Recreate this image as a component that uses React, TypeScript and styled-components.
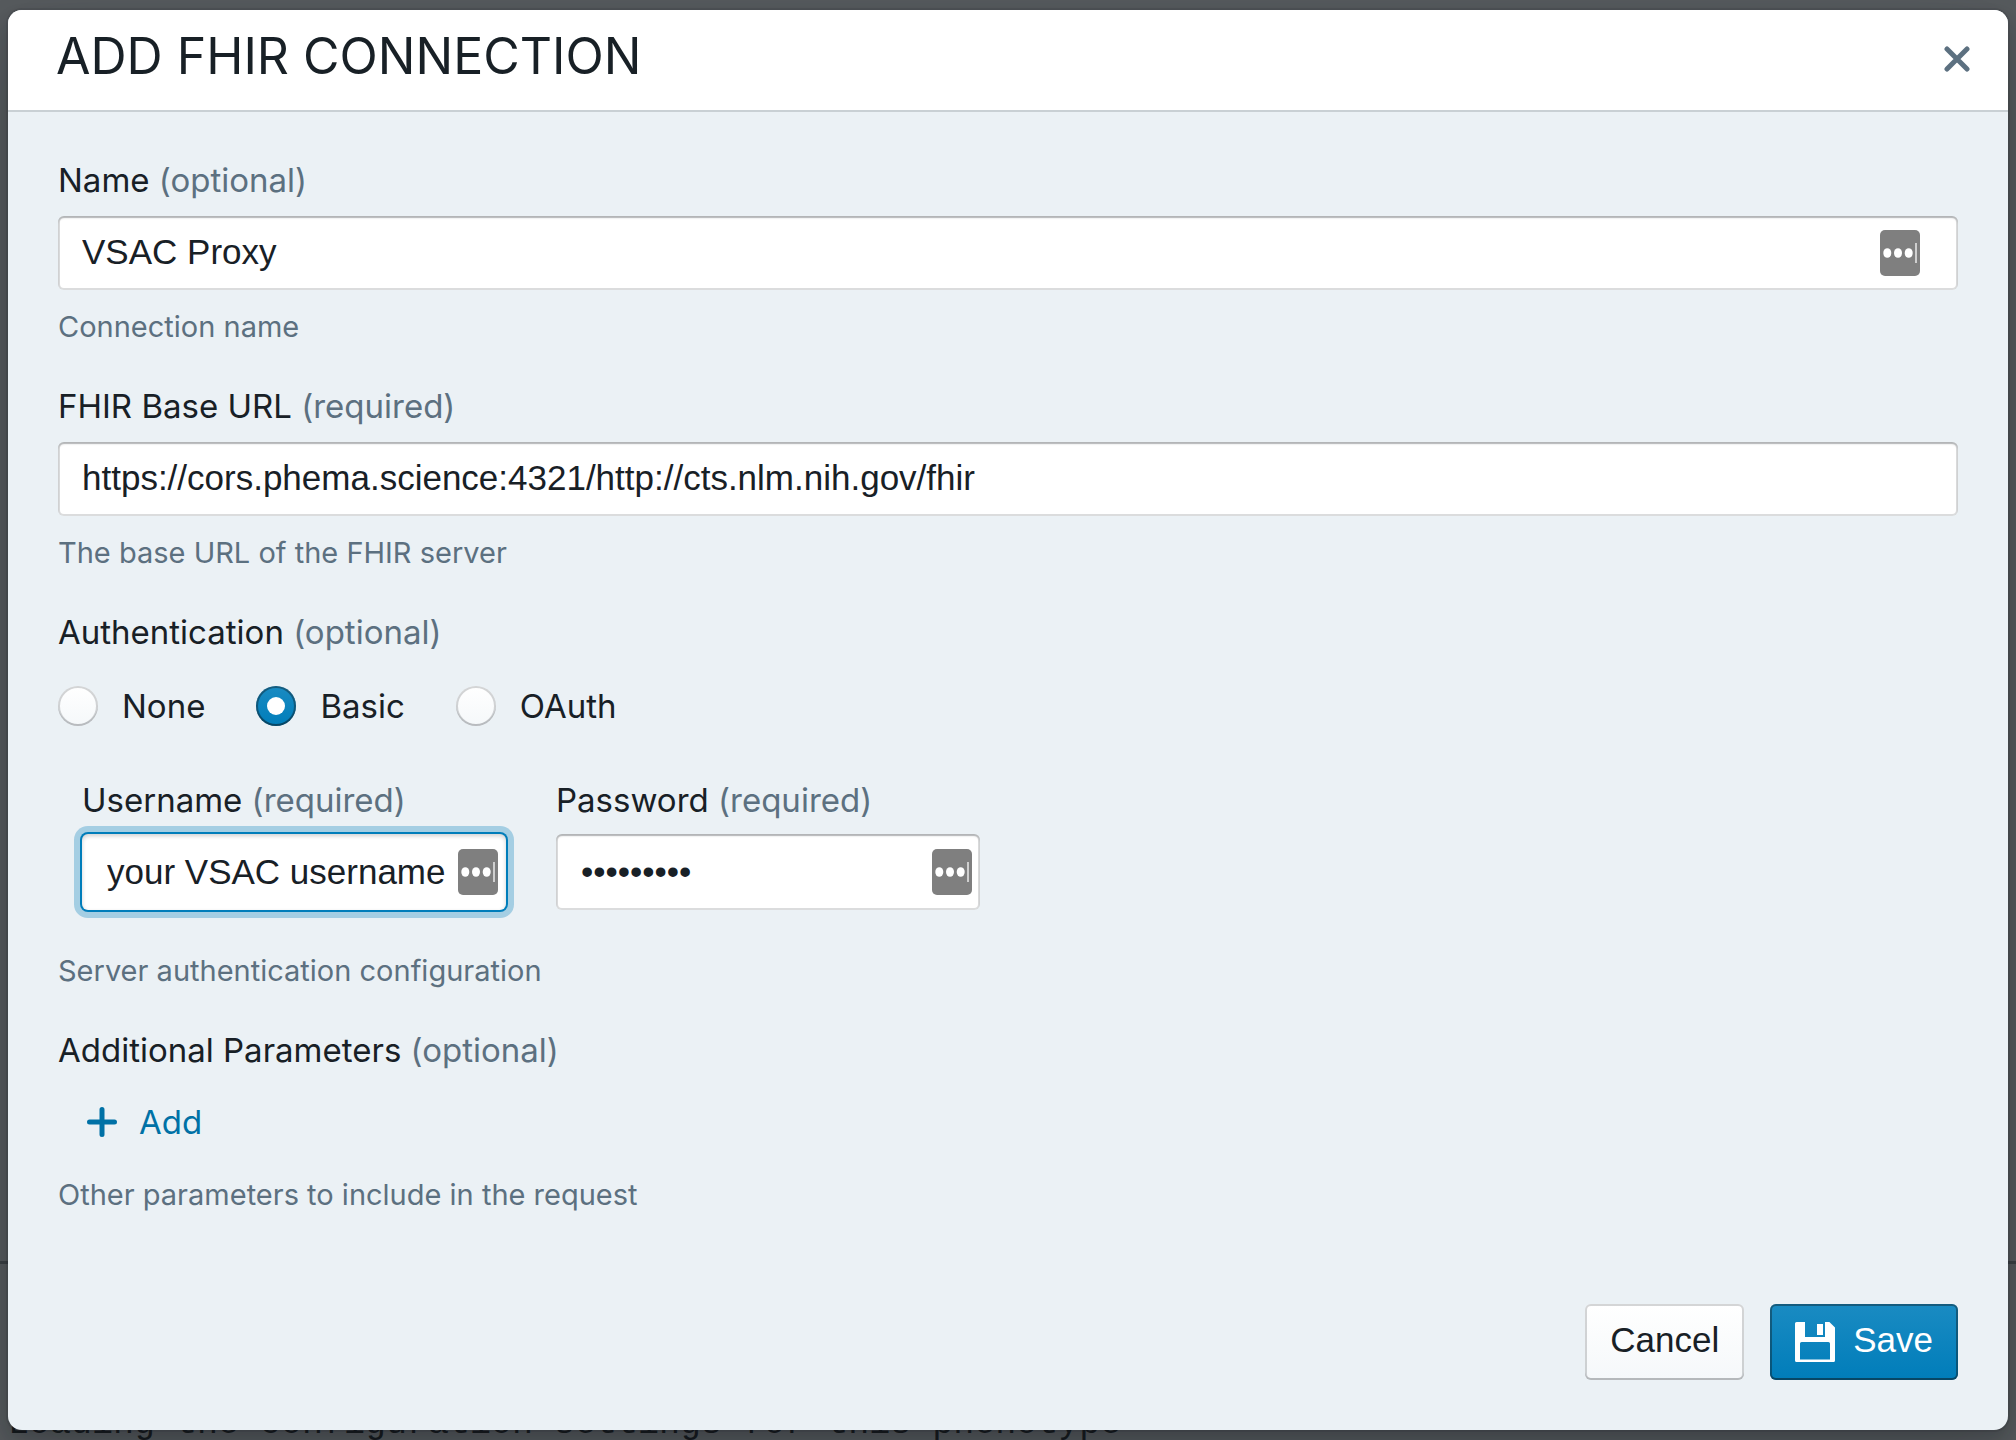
import React, { useState } from "react";
import styled, { createGlobalStyle, css } from "styled-components";

const uiFont = `Inter, "Liberation Sans", sans-serif`;
const controlFont = `"Liberation Sans", Arial, sans-serif`;
const ink = "#182026";
const muted = "#5c7080";

const GlobalStyle = createGlobalStyle`
  *, *::before, *::after { box-sizing: border-box; }
  body { margin: 0; background: #585c5f; color: ${ink}; font-family: ${uiFont}; }
`;

const Page = styled.div`
  position: relative;
  display: flex;
  min-height: 100vh;
  padding: 10px 8px;
  overflow: hidden;
`;

const PageRule = styled.div`
  position: absolute;
  left: 0;
  right: 0;
  bottom: 176px;
  height: 3px;
  background: #3c4144;
`;

const PageText = styled.p`
  position: absolute;
  left: 8px;
  bottom: -4px;
  margin: 0;
  color: #15191c;
  font: 35px/40px "Liberation Mono", "Courier New", monospace;
  white-space: nowrap;
`;

const Dialog = styled.section`
  position: relative;
  display: flex;
  flex: 1;
  flex-direction: column;
  min-width: 0;
  border-radius: 14px;
  background: #ebf1f5;
  box-shadow:
    0 0 0 2px rgba(16, 22, 26, 0.1),
    0 8px 16px rgba(16, 22, 26, 0.2),
    0 36px 92px 12px rgba(16, 22, 26, 0.2);
`;

const Header = styled.header`
  display: flex;
  align-items: center;
  justify-content: space-between;
  height: 102px;
  padding: 0 31px 8px 48px;
  border-bottom: 2px solid #c9d0d4;
  border-radius: 14px 14px 0 0;
  background: #fff;
`;

const Title = styled.h1`
  margin: 0;
  font-size: 50px;
  font-weight: 400;
  line-height: 60px;
`;

const CloseButton = styled.button`
  display: flex;
  align-items: center;
  justify-content: center;
  width: 40px;
  height: 40px;
  margin-top: 6px;
  padding: 0;
  border: 0;
  background: none;
  color: ${muted};
  cursor: pointer;
`;

const Body = styled.form`
  display: flex;
  flex: 1;
  flex-direction: column;
  gap: 42px;
  padding: 48px 50px 50px;
`;

const Group = styled.div`
  display: flex;
  flex-direction: column;
  align-items: stretch;
`;

const Label = styled.label`
  font-size: 33px;
  line-height: 40px;
`;

const Note = styled.span`
  color: ${muted};
`;

const Helper = styled.div<{ $gap?: number }>`
  margin-top: ${(p) => p.$gap ?? 20}px;
  color: ${muted};
  font-size: 29px;
  line-height: 34px;
`;

const InputWrap = styled.div<{ $gap: number }>`
  position: relative;
  display: flex;
  margin-top: ${(p) => p.$gap}px;
`;

const TextInput = styled.input<{ $tall?: boolean; $active?: boolean }>`
  width: 100%;
  height: ${(p) => (p.$tall ? 76 : 74)}px;
  padding: ${(p) => (p.$tall ? "0 25px" : "0 24px 2px")};
  border: 0;
  border-radius: 6px;
  outline: none;
  background: #fff;
  color: ${ink};
  font: 35px/40px ${controlFont};
  box-shadow:
    inset 0 0 0 2px rgba(16, 22, 26, 0.15),
    inset 0 2px 2px rgba(16, 22, 26, 0.2);
  ${(p) =>
    p.$active &&
    css`
      box-shadow:
        0 0 0 2px #007dba,
        0 0 0 8px rgba(0, 125, 186, 0.3),
        inset 0 2px 4px rgba(16, 22, 26, 0.2);
    `}
`;

const KeyButton = styled.button<{ $right: number }>`
  position: absolute;
  top: 50%;
  right: ${(p) => p.$right}px;
  width: 40px;
  height: 46px;
  margin-top: -23px;
  padding: 0;
  border: 0;
  border-radius: 5px;
  background: #7f7f7f;
  cursor: pointer;

  svg { display: block; }
`;

const RadioRow = styled.div`
  display: flex;
  gap: 51px;
  margin-top: 34px;
`;

const RadioLabel = styled(Label)`
  display: flex;
  align-items: center;
  gap: 24px;
`;

const Radio = styled.input`
  appearance: none;
  display: grid;
  place-items: center;
  width: 40px;
  height: 40px;
  margin: 0;
  border-radius: 50%;
  background: linear-gradient(#fff, #f5f8fa);
  box-shadow:
    inset 0 0 0 2px rgba(16, 22, 26, 0.18),
    inset 0 -2px 0 rgba(16, 22, 26, 0.1);

  &:checked {
    background: linear-gradient(#1a8bc2, #007dba);
    box-shadow:
      inset 0 0 0 2px rgba(16, 22, 26, 0.4),
      inset 0 -2px 0 rgba(16, 22, 26, 0.2);
  }

  &:checked::before {
    content: "";
    width: 18px;
    height: 18px;
    border-radius: 50%;
    background: #fff;
  }
`;

const Credentials = styled.div`
  display: flex;
  gap: 50px;
  margin: 54px 0 0 24px;
`;

const Credential = styled(Group)`
  width: 424px;
`;

const AddButton = styled.button`
  display: flex;
  align-items: center;
  align-self: flex-start;
  gap: 22px;
  height: 40px;
  margin: 32px 0 0 29px;
  padding: 0;
  border: 0;
  background: none;
  color: #0071a6;
  font: 33px/40px ${uiFont};
  cursor: pointer;
`;

const Footer = styled.footer`
  display: flex;
  justify-content: flex-end;
  gap: 26px;
  margin-top: auto;
`;

const ActionButton = styled.button<{ $primary?: boolean }>`
  display: flex;
  align-items: center;
  gap: 18px;
  height: 76px;
  padding: 0 25px 4px;
  border: 0;
  border-radius: 6px;
  background: linear-gradient(#fff, #f5f8fa);
  color: ${ink};
  font: 35px/40px ${controlFont};
  box-shadow:
    inset 0 0 0 2px rgba(16, 22, 26, 0.18),
    inset 0 -2px 0 rgba(16, 22, 26, 0.12);
  cursor: pointer;

  svg { margin-top: 4px; }

  ${(p) =>
    p.$primary &&
    css`
      background: linear-gradient(#1a8bc2, #007dba);
      color: #fff;
      box-shadow:
        inset 0 0 0 2px rgba(16, 22, 26, 0.4),
        inset 0 -2px 0 rgba(16, 22, 26, 0.2);
    `}
`;

function KeyFill({ right }: { right: number }) {
  return (
    <KeyButton type="button" aria-label="Fill from password manager" $right={right}>
      <svg width="40" height="46" viewBox="0 0 40 46">
        <ellipse cx="7.3" cy="23" rx="4" ry="4.8" fill="#fff" />
        <ellipse cx="18" cy="23" rx="4" ry="4.8" fill="#fff" />
        <ellipse cx="28.7" cy="23" rx="4" ry="4.8" fill="#fff" />
        <rect x="35" y="13" width="2" height="20" fill="#cfcfcf" />
      </svg>
    </KeyButton>
  );
}

const authModes = ["None", "Basic", "OAuth"];

export default function App() {
  const [name, setName] = useState("VSAC Proxy");
  const [url, setUrl] = useState("https://cors.phema.science:4321/http://cts.nlm.nih.gov/fhir");
  const [auth, setAuth] = useState("Basic");
  const [user, setUser] = useState("your VSAC username");
  const [password, setPassword] = useState("password1");

  return (
    <Page>
      <GlobalStyle />
      <PageRule />
      <PageText aria-hidden="true">Loading the configuration settings for this phenotype</PageText>
      <Dialog role="dialog" aria-labelledby="dialog-title">
        <Header>
          <Title id="dialog-title">ADD FHIR CONNECTION</Title>
          <CloseButton type="button" aria-label="Close">
            <svg width="26" height="26" viewBox="0 0 26 26" stroke="currentColor" strokeWidth="5" strokeLinecap="round">
              <path d="M3 3 23 23M23 3 3 23" />
            </svg>
          </CloseButton>
        </Header>
        <Body onSubmit={(e) => e.preventDefault()}>
          <Group>
            <Label htmlFor="name">Name <Note>(optional)</Note></Label>
            <InputWrap $gap={16}>
              <TextInput id="name" value={name} onChange={(e) => setName(e.target.value)} />
              <KeyFill right={38} />
            </InputWrap>
            <Helper>Connection name</Helper>
          </Group>

          <Group>
            <Label htmlFor="url">FHIR Base URL <Note>(required)</Note></Label>
            <InputWrap $gap={16}>
              <TextInput id="url" value={url} onChange={(e) => setUrl(e.target.value)} spellCheck={false} />
            </InputWrap>
            <Helper>The base URL of the FHIR server</Helper>
          </Group>

          <Group role="radiogroup" aria-labelledby="auth-label">
            <Label as="div" id="auth-label">Authentication <Note>(optional)</Note></Label>
            <RadioRow>
              {authModes.map((mode) => (
                <RadioLabel key={mode}>
                  <Radio type="radio" name="auth" checked={auth === mode} onChange={() => setAuth(mode)} />
                  {mode}
                </RadioLabel>
              ))}
            </RadioRow>
            <Credentials>
              <Credential>
                <Label htmlFor="username">Username <Note>(required)</Note></Label>
                <InputWrap $gap={14}>
                  <TextInput id="username" $tall $active value={user} onChange={(e) => setUser(e.target.value)} />
                  <KeyFill right={8} />
                </InputWrap>
              </Credential>
              <Credential>
                <Label htmlFor="password">Password <Note>(required)</Note></Label>
                <InputWrap $gap={14}>
                  <TextInput id="password" type="password" $tall value={password} onChange={(e) => setPassword(e.target.value)} />
                  <KeyFill right={8} />
                </InputWrap>
              </Credential>
            </Credentials>
            <Helper $gap={44}>Server authentication configuration</Helper>
          </Group>

          <Group>
            <Label as="div">Additional Parameters <Note>(optional)</Note></Label>
            <AddButton type="button">
              <svg width="30" height="30" viewBox="0 0 30 30" stroke="currentColor" strokeWidth="5" strokeLinecap="round">
                <path d="M15 2.5V27.5M2.5 15H27.5" />
              </svg>
              Add
            </AddButton>
            <Helper $gap={36}>Other parameters to include in the request</Helper>
          </Group>

          <Footer>
            <ActionButton type="button">Cancel</ActionButton>
            <ActionButton type="submit" $primary>
              <svg width="40" height="40" viewBox="0 0 20 20" fill="currentColor" fillRule="evenodd">
                <path d="M.8 0H5v7.5h10V0h2.2L20 2.8v16.4a.8.8 0 0 1-.8.8H.8a.8.8 0 0 1-.8-.8V.8A.8.8 0 0 1 .8 0ZM3.3 10a.8.8 0 0 0-.8.8v7.9h15v-7.9a.8.8 0 0 0-.8-.8Z" />
                <path d="M11 1h3v5.5h-3Z" />
              </svg>
              Save
            </ActionButton>
          </Footer>
        </Body>
      </Dialog>
    </Page>
  );
}
